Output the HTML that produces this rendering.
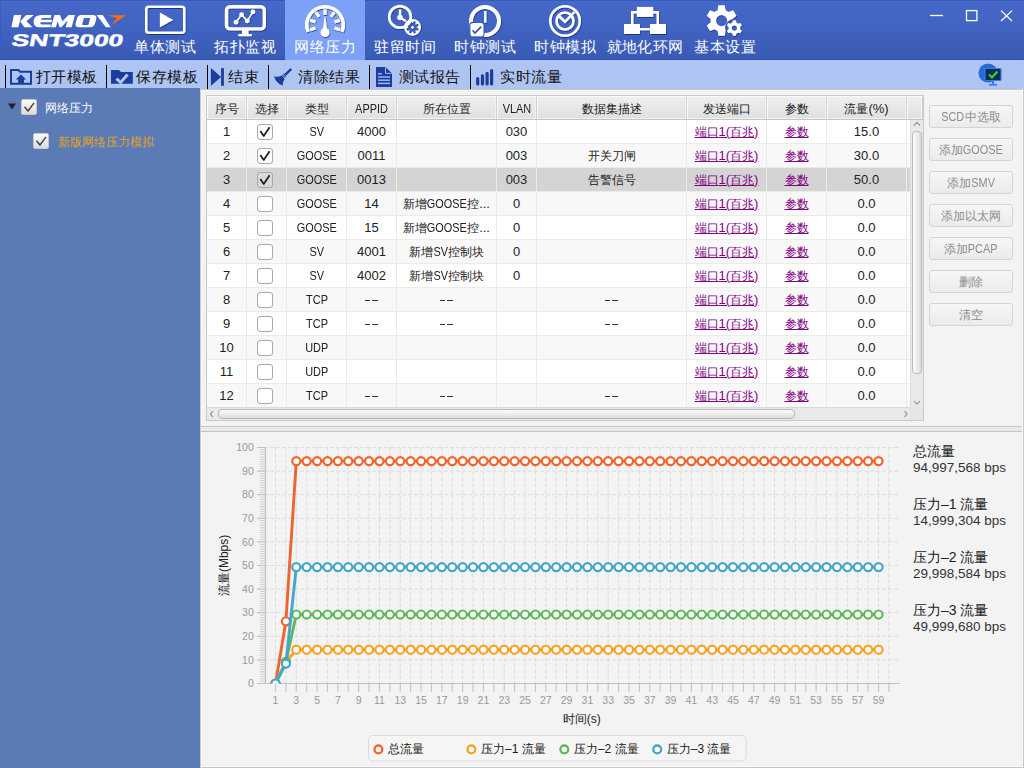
<!DOCTYPE html><html><head><meta charset="utf-8"><style>
*{margin:0;padding:0;box-sizing:border-box}
html,body{width:1024px;height:768px;overflow:hidden}
body{position:relative;background:#f3f3f3;font-family:"Liberation Sans",sans-serif;color:#222}
.a{position:absolute}
#top{position:absolute;left:0;top:0;width:1024px;height:60px;background:linear-gradient(#4669ca,#3a5bb5);border-top:1px solid #3559b9;border-bottom:1px solid #2f4fa6;border-left:1px solid #3a5cbc}
#active{position:absolute;left:285px;top:0;width:80px;height:60px;background:#7ca1f6}
.navl{position:absolute;top:38px;width:100px;text-align:center;color:#fff;font-size:15px;line-height:18px;white-space:nowrap;letter-spacing:0.35px;padding-left:0.35px}
#tb{position:absolute;left:0;top:60px;width:1024px;height:29px;background:#aec4f2}
.sep{position:absolute;top:65px;width:1px;height:24px;background:#000}
.tbl{position:absolute;top:66.5px;font-size:15px;line-height:20px;color:#111;white-space:nowrap;letter-spacing:0.6px}
#left{position:absolute;left:0;top:88px;width:200px;height:680px;background:#5b7bb6}
.cb{position:absolute;width:16px;height:16px;border:1px solid #c8c8c8;border-radius:2px;background:linear-gradient(#fafafa,#dcdcdc)}
#content{position:absolute;left:200px;top:89px;width:824px;height:679px;background:#f3f3f3;border-left:1px solid #cfcdc3;border-top:1px solid #c9c6ba;box-shadow:inset 1px 1px #f9f9f7}
</style></head><body>
<div id="top"></div><div id="active"></div>
<svg class="a" style="left:0;top:0" width="140" height="60">
<g fill="#fff">
<path d="M13.9 15.1 H21.4 L18.3 27.3 H11.4 Z"/>
<path d="M26.1 15.1 H33.8 L26.4 21.2 L32.6 27.3 H24.4 L20.2 21.4 Z"/>
<path fill-rule="evenodd" d="M41.5 15.1 H51.4 L50.7 18.1 H43 Q41.3 18.1 40.7 19.8 H52.1 L51.5 22.3 H40.2 Q40.2 24.5 42 24.5 H51 L50.3 27.3 H39.5 Q33.2 27.3 33.6 21.2 Q34.2 15.1 41.5 15.1 Z"/>
<path d="M51 27.3 L54.4 15.1 H60 L62.4 21.2 L68.6 15.1 H75 L71.6 27.3 H65.6 L67.6 20.6 L61.4 27.3 H59.6 L57.6 21.2 L55.9 27.3 Z"/>
<path fill-rule="evenodd" d="M81.4 15.1 H92.6 Q97.2 15.1 96.3 18.8 L95 23.6 Q94 27.3 89.6 27.3 H79 Q74.6 27.3 75.6 23.6 L76.9 18.8 Q77.8 15.1 81.4 15.1 Z M84.6 18.1 H89.4 Q90.2 18.1 90 18.9 L88.6 24.2 Q88.4 25 87.6 25 H82.8 Q82 25 82.2 24.2 L83.6 18.9 Q83.8 18.1 84.6 18.1 Z"/>
<path d="M96.6 15.1 H102.8 L110.6 27.3 H105.8 Z"/>
</g>
<path d="M107.6 15.2 L126 15.2 L110.4 25.9 L117.2 18.2 Z" fill="#f96f10"/>
<text x="11" y="45.4" font-family="Liberation Sans" font-weight="bold" font-size="17" fill="#fff" stroke="#fff" stroke-width="0.4" textLength="111.5" lengthAdjust="spacingAndGlyphs" transform="translate(8.6 0.5) skewX(-11)">SNT3000</text>
</svg>
<div class="navl" style="left:115px">单体测试</div>
<div class="navl" style="left:195px">拓扑监视</div>
<div class="navl" style="left:275px">网络压力</div>
<div class="navl" style="left:355px">驻留时间</div>
<div class="navl" style="left:435px">时钟测试</div>
<div class="navl" style="left:515px">时钟模拟</div>
<div class="navl" style="left:595px">就地化环网</div>
<div class="navl" style="left:675px">基本设置</div>
<svg class="a" style="left:0;top:0" width="1024" height="60">
<defs><filter id="sh" x="-20%" y="-20%" width="140%" height="140%"><feDropShadow dx="0.6" dy="1" stdDeviation="0.6" flood-color="#0c2080" flood-opacity="0.75"/></filter></defs>
<g filter="url(#sh)">
<g fill="none" stroke="#fff">
<rect x="146.25" y="6.85" width="38" height="25.9" rx="2.5" stroke-width="2.5"/>
<rect x="226.5" y="6.7" width="37.8" height="22.2" rx="3.5" stroke-width="3.4"/>
<path d="M308.08 31.84 A18.25 18.25 0 1 1 341.92 31.84" stroke-width="3.5"/>
<circle cx="400" cy="16.9" r="10.8" stroke-width="2.7"/>
<circle cx="565" cy="20.9" r="14.7" stroke-width="2.6"/>
<circle cx="565" cy="21" r="8.5" stroke-width="2.6"/>
<path d="M559.1 16.25 L565 21.8 L574.4 12.2" stroke-width="2.6"/>
<path d="M632.25 24 V12.2 H657.75 V24" stroke-width="2.5"/>
<path d="M640 29.2 H650" stroke-width="2.3"/>
<polyline points="236,22.2 241.6,14.7 247.25,20.9 252.9,11.9" stroke-width="1.6"/>
</g>
<g stroke="#fff" stroke-width="3.2"><line x1="325.00" y1="15.00" x2="325.00" y2="9.40"/><line x1="330.88" y1="16.91" x2="334.17" y2="12.38"/><line x1="334.51" y1="21.91" x2="339.84" y2="20.18"/><line x1="334.51" y1="28.09" x2="339.84" y2="29.82"/><line x1="319.12" y1="16.91" x2="315.83" y2="12.38"/><line x1="315.49" y1="21.91" x2="310.16" y2="20.18"/><line x1="315.49" y1="28.09" x2="310.16" y2="29.82"/></g>
<g fill="#fff">
<path d="M159.9 12.5 L173.25 19.9 L159.9 27.25 Z"/>
<rect x="242" y="29" width="6.5" height="6"/><rect x="238.2" y="34" width="13.8" height="2.2" rx="0.8"/>
<circle cx="236" cy="22.2" r="2.4"/><circle cx="241.6" cy="14.7" r="2.4"/><circle cx="247.25" cy="20.9" r="2.4"/><circle cx="252.9" cy="11.9" r="2.4"/>
<path d="M322.9 30 L324.6 16.8 L325.4 16.8 L327.1 30 Z"/><circle cx="325" cy="32.5" r="4.5"/>
<path d="M398.8 9.5 h2.4 v7.4 l5.2 3.2 -1.2 1.9 -6.4 -3.8 z"/><circle cx="400" cy="17.5" r="2.7"/>
<rect x="484.1" y="11" width="2.3" height="11.6"/>
<rect x="636.9" y="6.9" width="16.3" height="10"/><rect x="624" y="24" width="16" height="10"/><rect x="650" y="24" width="16" height="10"/>
</g>
<defs>
<mask id="m4"><rect x="395" y="10" width="30" height="30" fill="#fff"/><path d="M412.76 23.01L413.94 20.96L415.97 21.80L415.35 24.08A4.3 4.3 0 0 1 415.72 24.45L418.00 23.83L418.84 25.86L416.79 27.04A4.3 4.3 0 0 1 416.79 27.56L418.84 28.74L418.00 30.77L415.72 30.15A4.3 4.3 0 0 1 415.35 30.52L415.97 32.80L413.94 33.64L412.76 31.59A4.3 4.3 0 0 1 412.24 31.59L411.06 33.64L409.03 32.80L409.65 30.52A4.3 4.3 0 0 1 409.28 30.15L407.00 30.77L406.16 28.74L408.21 27.56A4.3 4.3 0 0 1 408.21 27.04L406.16 25.86L407.00 23.83L409.28 24.45A4.3 4.3 0 0 1 409.65 24.08L409.03 21.80L411.06 20.96L412.24 23.01A4.3 4.3 0 0 1 412.76 23.01Z" fill="#000"/><circle cx="412.5" cy="27.3" r="1.4" fill="#fff"/></mask>
<mask id="m5a"><rect x="460" y="0" width="50" height="45" fill="#fff"/><rect x="469.3" y="21.7" width="15.3" height="15.8" rx="3.6" fill="#000"/></mask>
<mask id="m5b"><rect x="460" y="0" width="50" height="45" fill="#fff"/><path d="M472.6 30.2 L474.9 33.1 L481.2 26.6" fill="none" stroke="#000" stroke-width="1.8"/></mask>
<mask id="m8a"><rect x="690" y="0" width="60" height="45" fill="#fff"/><circle cx="721.6" cy="20.6" r="5.6" fill="#000"/><circle cx="734.4" cy="28.1" r="9.4" fill="#000"/></mask>
<mask id="m8b"><rect x="690" y="0" width="60" height="45" fill="#fff"/><circle cx="734.4" cy="28.1" r="2.6" fill="#000"/></mask>
</defs>
<circle cx="412.5" cy="27.3" r="8.4" fill="#fff" mask="url(#m4)"/>
<circle cx="485" cy="21" r="14" stroke-width="4" fill="none" stroke="#fff" mask="url(#m5a)"/>
<rect x="470.5" y="22.9" width="12.9" height="13.4" rx="2.6" fill="#fff" mask="url(#m5b)"/>
<path d="M717.60 10.35L718.40 5.33L724.80 5.33L725.60 10.35A11 11 0 0 1 728.47 12.01L733.22 10.19L736.42 15.74L732.47 18.94A11 11 0 0 1 732.47 22.26L736.42 25.46L733.22 31.01L728.47 29.19A11 11 0 0 1 725.60 30.85L724.80 35.87L718.40 35.87L717.60 30.85A11 11 0 0 1 714.73 29.19L709.98 31.01L706.78 25.46L710.73 22.26A11 11 0 0 1 710.73 18.94L706.78 15.74L709.98 10.19L714.73 12.01A11 11 0 0 1 717.60 10.35Z" fill="#fff" mask="url(#m8a)"/>
<path d="M732.50 22.62L732.90 20.34L735.90 20.34L736.30 22.62A5.8 5.8 0 0 1 738.20 23.71L740.37 22.92L741.87 25.52L740.10 27.01A5.8 5.8 0 0 1 740.10 29.19L741.87 30.68L740.37 33.28L738.20 32.49A5.8 5.8 0 0 1 736.30 33.58L735.90 35.86L732.90 35.86L732.50 33.58A5.8 5.8 0 0 1 730.60 32.49L728.43 33.28L726.93 30.68L728.70 29.19A5.8 5.8 0 0 1 728.70 27.01L726.93 25.52L728.43 22.92L730.60 23.71A5.8 5.8 0 0 1 732.50 22.62Z" fill="#fff" mask="url(#m8b)"/>
</g>
<g stroke="#fff" stroke-width="1.3" fill="none">
<line x1="930" y1="15.5" x2="943" y2="15.5"/>
<rect x="966.5" y="10.6" width="10.4" height="10"/>
<line x1="1001" y1="10.6" x2="1012" y2="21"/><line x1="1012" y1="10.6" x2="1001" y2="21"/>
</g>
</svg>
<div id="tb"></div>
<div class="sep" style="left:5px"></div>
<div class="sep" style="left:106px"></div>
<div class="sep" style="left:207px"></div>
<div class="sep" style="left:268px"></div>
<div class="sep" style="left:369px"></div>
<div class="sep" style="left:470px"></div>
<div class="tbl" style="left:35.5px">打开模板</div>
<div class="tbl" style="left:136px">保存模板</div>
<div class="tbl" style="left:228px">结束</div>
<div class="tbl" style="left:298px">清除结果</div>
<div class="tbl" style="left:398.5px">测试报告</div>
<div class="tbl" style="left:500px">实时流量</div>
<svg class="a" style="left:0;top:60px" width="1024" height="29">
<g transform="translate(0,-60)">
<path d="M11 70 H18.5 L20 71.8 H31 V83.8 H11 Z" fill="none" stroke="#1a3d9e" stroke-width="2"/>
<path d="M21 74.4 L26.2 79.4 H23.9 V84 H18.2 V79.4 H15.8 Z" fill="#1a3d9e"/>
<path d="M111 70 H119 L121 72 H132.8 V83.8 H111 Z" fill="#1a3d9e"/>
<path d="M116.4 78.6 L120.6 82.4 L127.6 74.4" fill="none" stroke="#b3c4ee" stroke-width="3"/>
<path d="M210.9 68.1 L221.1 77 L210.9 85.8 Z" fill="#1a3d9e"/>
<rect x="221.1" y="68.1" width="2.8" height="17.7" fill="#1a3d9e"/>
<line x1="290.6" y1="69.6" x2="286.2" y2="73.8" stroke="#1a3d9e" stroke-width="2.4" stroke-linecap="round"/>
<line x1="283.6" y1="73.6" x2="286.3" y2="76.4" stroke="#1a3d9e" stroke-width="1.1"/>
<line x1="282.4" y1="74.9" x2="285.1" y2="77.7" stroke="#1a3d9e" stroke-width="1.1"/>
<path d="M274 76.3 Q278 77.6 281.6 75.6 L284.6 79 Q282.3 82.3 282.6 85.6 Q276.3 83.6 274 76.3 Z" fill="#1a3d9e"/>
<path d="M376 66.9 H385.5 L392 73.4 V86.9 H376 Z" fill="#1a3d9e"/>
<path d="M385.5 67.5 V73.4 H391.5" fill="none" stroke="#a9bdee" stroke-width="1"/>
<g stroke="#a9bdee" stroke-width="1.4"><line x1="378" y1="73.8" x2="382" y2="73.8"/><line x1="378" y1="77" x2="390" y2="77"/><line x1="378" y1="80.2" x2="390" y2="80.2"/><line x1="378" y1="83.4" x2="390" y2="83.4"/></g>
<g stroke="#1a3d9e" stroke-width="3.2" stroke-linecap="round">
<line x1="477.7" y1="78.6" x2="477.7" y2="84"/><line x1="482.5" y1="75.8" x2="482.5" y2="84"/><line x1="487.1" y1="73.3" x2="487.1" y2="84"/><line x1="491.6" y1="70.6" x2="491.6" y2="84"/>
</g>
<circle cx="988" cy="73" r="9.5" fill="#2a6ad8"/>
<rect x="985" y="68.5" width="16" height="12" rx="1" fill="#0d2a5a" stroke="#2f7fe8" stroke-width="1.2"/>
<path d="M989 74.5 L992 77.5 L997.5 71.5" fill="none" stroke="#22e022" stroke-width="2.2"/>
<rect x="992" y="81" width="2" height="3" fill="#2f7fe8"/><rect x="989" y="84" width="8" height="1.6" fill="#2f7fe8"/>
</g></svg>
<div id="left"></div>
<svg class="a" style="left:0;top:88px" width="200" height="80"><path d="M8 15.6 L16 15.6 L12 21.5 Z" fill="#222"/></svg>
<div class="cb" style="left:21px;top:99px"></div><div class="cb" style="left:33px;top:133px"></div>
<svg class="a" style="left:0;top:0" width="60" height="160"><g fill="none" stroke="#444" stroke-width="1.4"><path d="M24.5 106.8 L28 111 L34 102.8"/><path d="M36.5 140.8 L40 145 L46 136.8"/></g></svg>
<div class="a" style="left:45px;top:99px;font-size:12px;line-height:18px;color:#fff">网络压力</div>
<div class="a" style="left:58px;top:133px;font-size:12px;line-height:18px;color:#e6a31a">新版网络压力模拟</div>
<div id="content"></div>
<style>
#tbl{position:absolute;left:206px;top:95px;width:718px;height:326px;border:1px solid #c9c9c9;background:#fff;overflow:hidden}
.hd{position:absolute;top:96px;height:24px;background:linear-gradient(#efefef,#dfdfdf);border-right:1px solid #cfcfcf;border-bottom:1px solid #c4c4c4;font-size:13px;line-height:23px;text-align:center;color:#222;white-space:nowrap;border-top:1px solid #fafafa;box-shadow:inset 1px 0 #fbfbfb,inset -1px -1px #f2f2f2}
.row{position:absolute;left:207px;width:703px;height:24px}
.cl{position:absolute;top:120px;width:1px;height:287px;background:#ebebeb}
.hl{position:absolute;left:207px;width:703px;height:1px;background:#ebebeb}
.td{position:absolute;height:24px;font-size:13px;line-height:24px;text-align:center;color:#222;white-space:nowrap;overflow:hidden}
.lk{color:#800080;text-decoration:underline}
.tcb{position:absolute;width:15.5px;height:15.5px;border:1px solid #a9a9a9;border-radius:3px;background:#fff}
.btn{position:absolute;left:929px;width:84px;height:22.5px;border:1px solid #d4d4d4;border-radius:3px;background:linear-gradient(#f6f6f6,#ebebeb);font-size:13px;line-height:20px;padding-top:1px;text-align:center;color:#8c8c8c;white-space:nowrap}
</style>
<div id="tbl"></div>
<div class="hd" style="left:207px;width:40px"><span style="font-size:12px">序号</span></div>
<div class="hd" style="left:247px;width:40px"><span style="font-size:12px">选择</span></div>
<div class="hd" style="left:287px;width:60px"><span style="font-size:12px">类型</span></div>
<div class="hd" style="left:347px;width:50px"><span style="display:inline-block;transform:scaleX(.84);margin:0 -3.12px">APPID</span></div>
<div class="hd" style="left:397px;width:100px"><span style="font-size:12px">所在位置</span></div>
<div class="hd" style="left:497px;width:40px"><span style="display:inline-block;transform:scaleX(.84);margin:0 -2.72px">VLAN</span></div>
<div class="hd" style="left:537px;width:150px"><span style="font-size:12px">数据集描述</span></div>
<div class="hd" style="left:687px;width:80px"><span style="font-size:12px">发送端口</span></div>
<div class="hd" style="left:767px;width:60px"><span style="font-size:12px">参数</span></div>
<div class="hd" style="left:827px;width:80px"><span style="font-size:12px">流量</span>(%)</div>
<div class="hd" style="left:907px;width:16px"></div>
<div class="row" style="top:120px;background:#fff"></div>
<div class="row" style="top:144px;background:#f8f8f8"></div>
<div class="row" style="top:168px;background:#d4d4d4"></div>
<div class="row" style="top:192px;background:#f8f8f8"></div>
<div class="row" style="top:216px;background:#fff"></div>
<div class="row" style="top:240px;background:#f8f8f8"></div>
<div class="row" style="top:264px;background:#fff"></div>
<div class="row" style="top:288px;background:#f8f8f8"></div>
<div class="row" style="top:312px;background:#fff"></div>
<div class="row" style="top:336px;background:#f8f8f8"></div>
<div class="row" style="top:360px;background:#fff"></div>
<div class="row" style="top:384px;background:#f8f8f8"></div>
<div class="hl" style="top:143px"></div>
<div class="hl" style="top:167px"></div>
<div class="hl" style="top:191px"></div>
<div class="hl" style="top:215px"></div>
<div class="hl" style="top:239px"></div>
<div class="hl" style="top:263px"></div>
<div class="hl" style="top:287px"></div>
<div class="hl" style="top:311px"></div>
<div class="hl" style="top:335px"></div>
<div class="hl" style="top:359px"></div>
<div class="hl" style="top:383px"></div>
<div class="hl" style="top:407px"></div>
<div class="cl" style="left:246px"></div>
<div class="cl" style="left:286px"></div>
<div class="cl" style="left:346px"></div>
<div class="cl" style="left:396px"></div>
<div class="cl" style="left:496px"></div>
<div class="cl" style="left:536px"></div>
<div class="cl" style="left:686px"></div>
<div class="cl" style="left:766px"></div>
<div class="cl" style="left:826px"></div>
<div class="cl" style="left:906px"></div>
<div class="td" style="left:207px;top:120px;width:39px">1</div>
<div class="tcb" style="left:257px;top:124px;background:#fff"></div>
<svg class="a" style="left:257px;top:124px" width="16" height="16"><path d="M3.3 6.9 L6.7 11.9 L12.6 3.2" fill="none" stroke="#222" stroke-width="1.8" stroke-linejoin="round"/></svg>
<div class="td" style="left:287px;top:120px;width:59px"><span style="display:inline-block;transform:scaleX(.84);margin:0 -1.39px">SV</span></div>
<div class="td" style="left:347px;top:120px;width:49px">4000</div>
<div class="td" style="left:397px;top:120px;width:99px"></div>
<div class="td" style="left:497px;top:120px;width:39px">030</div>
<div class="td" style="left:537px;top:120px;width:149px"></div>
<div class="td" style="left:687px;top:120px;width:79px"><span class="lk"><span style="font-size:12px">端口</span>1(<span style="font-size:12px">百兆</span>)</span></div>
<div class="td" style="left:767px;top:120px;width:59px"><span class="lk"><span style="font-size:12px">参数</span></span></div>
<div class="td" style="left:827px;top:120px;width:79px">15.0</div>
<div class="td" style="left:207px;top:144px;width:39px">2</div>
<div class="tcb" style="left:257px;top:148px;background:#fff"></div>
<svg class="a" style="left:257px;top:148px" width="16" height="16"><path d="M3.3 6.9 L6.7 11.9 L12.6 3.2" fill="none" stroke="#222" stroke-width="1.8" stroke-linejoin="round"/></svg>
<div class="td" style="left:287px;top:144px;width:59px"><span style="display:inline-block;transform:scaleX(.84);margin:0 -3.81px">GOOSE</span></div>
<div class="td" style="left:347px;top:144px;width:49px">0011</div>
<div class="td" style="left:397px;top:144px;width:99px"></div>
<div class="td" style="left:497px;top:144px;width:39px">003</div>
<div class="td" style="left:537px;top:144px;width:149px"><span style="font-size:12px">开关刀闸</span></div>
<div class="td" style="left:687px;top:144px;width:79px"><span class="lk"><span style="font-size:12px">端口</span>1(<span style="font-size:12px">百兆</span>)</span></div>
<div class="td" style="left:767px;top:144px;width:59px"><span class="lk"><span style="font-size:12px">参数</span></span></div>
<div class="td" style="left:827px;top:144px;width:79px">30.0</div>
<div class="td" style="left:207px;top:168px;width:39px">3</div>
<div class="tcb" style="left:257px;top:172px;background:#d9d9d9"></div>
<svg class="a" style="left:257px;top:172px" width="16" height="16"><path d="M3.3 6.9 L6.7 11.9 L12.6 3.2" fill="none" stroke="#222" stroke-width="1.8" stroke-linejoin="round"/></svg>
<div class="td" style="left:287px;top:168px;width:59px"><span style="display:inline-block;transform:scaleX(.84);margin:0 -3.81px">GOOSE</span></div>
<div class="td" style="left:347px;top:168px;width:49px">0013</div>
<div class="td" style="left:397px;top:168px;width:99px"></div>
<div class="td" style="left:497px;top:168px;width:39px">003</div>
<div class="td" style="left:537px;top:168px;width:149px"><span style="font-size:12px">告警信号</span></div>
<div class="td" style="left:687px;top:168px;width:79px"><span class="lk"><span style="font-size:12px">端口</span>1(<span style="font-size:12px">百兆</span>)</span></div>
<div class="td" style="left:767px;top:168px;width:59px"><span class="lk"><span style="font-size:12px">参数</span></span></div>
<div class="td" style="left:827px;top:168px;width:79px">50.0</div>
<div class="td" style="left:207px;top:192px;width:39px">4</div>
<div class="tcb" style="left:257px;top:196px;background:#fff"></div>
<div class="td" style="left:287px;top:192px;width:59px"><span style="display:inline-block;transform:scaleX(.84);margin:0 -3.81px">GOOSE</span></div>
<div class="td" style="left:347px;top:192px;width:49px">14</div>
<div class="td" style="left:397px;top:192px;width:99px"><span style="font-size:12px">新增</span><span style="display:inline-block;transform:scaleX(.84);margin:0 -3.81px">GOOSE</span><span style="font-size:12px">控</span>...</div>
<div class="td" style="left:497px;top:192px;width:39px">0</div>
<div class="td" style="left:537px;top:192px;width:149px"></div>
<div class="td" style="left:687px;top:192px;width:79px"><span class="lk"><span style="font-size:12px">端口</span>1(<span style="font-size:12px">百兆</span>)</span></div>
<div class="td" style="left:767px;top:192px;width:59px"><span class="lk"><span style="font-size:12px">参数</span></span></div>
<div class="td" style="left:827px;top:192px;width:79px">0.0</div>
<div class="td" style="left:207px;top:216px;width:39px">5</div>
<div class="tcb" style="left:257px;top:220px;background:#fff"></div>
<div class="td" style="left:287px;top:216px;width:59px"><span style="display:inline-block;transform:scaleX(.84);margin:0 -3.81px">GOOSE</span></div>
<div class="td" style="left:347px;top:216px;width:49px">15</div>
<div class="td" style="left:397px;top:216px;width:99px"><span style="font-size:12px">新增</span><span style="display:inline-block;transform:scaleX(.84);margin:0 -3.81px">GOOSE</span><span style="font-size:12px">控</span>...</div>
<div class="td" style="left:497px;top:216px;width:39px">0</div>
<div class="td" style="left:537px;top:216px;width:149px"></div>
<div class="td" style="left:687px;top:216px;width:79px"><span class="lk"><span style="font-size:12px">端口</span>1(<span style="font-size:12px">百兆</span>)</span></div>
<div class="td" style="left:767px;top:216px;width:59px"><span class="lk"><span style="font-size:12px">参数</span></span></div>
<div class="td" style="left:827px;top:216px;width:79px">0.0</div>
<div class="td" style="left:207px;top:240px;width:39px">6</div>
<div class="tcb" style="left:257px;top:244px;background:#fff"></div>
<div class="td" style="left:287px;top:240px;width:59px"><span style="display:inline-block;transform:scaleX(.84);margin:0 -1.39px">SV</span></div>
<div class="td" style="left:347px;top:240px;width:49px">4001</div>
<div class="td" style="left:397px;top:240px;width:99px"><span style="font-size:12px">新增</span><span style="display:inline-block;transform:scaleX(.84);margin:0 -1.39px">SV</span><span style="font-size:12px">控制块</span></div>
<div class="td" style="left:497px;top:240px;width:39px">0</div>
<div class="td" style="left:537px;top:240px;width:149px"></div>
<div class="td" style="left:687px;top:240px;width:79px"><span class="lk"><span style="font-size:12px">端口</span>1(<span style="font-size:12px">百兆</span>)</span></div>
<div class="td" style="left:767px;top:240px;width:59px"><span class="lk"><span style="font-size:12px">参数</span></span></div>
<div class="td" style="left:827px;top:240px;width:79px">0.0</div>
<div class="td" style="left:207px;top:264px;width:39px">7</div>
<div class="tcb" style="left:257px;top:268px;background:#fff"></div>
<div class="td" style="left:287px;top:264px;width:59px"><span style="display:inline-block;transform:scaleX(.84);margin:0 -1.39px">SV</span></div>
<div class="td" style="left:347px;top:264px;width:49px">4002</div>
<div class="td" style="left:397px;top:264px;width:99px"><span style="font-size:12px">新增</span><span style="display:inline-block;transform:scaleX(.84);margin:0 -1.39px">SV</span><span style="font-size:12px">控制块</span></div>
<div class="td" style="left:497px;top:264px;width:39px">0</div>
<div class="td" style="left:537px;top:264px;width:149px"></div>
<div class="td" style="left:687px;top:264px;width:79px"><span class="lk"><span style="font-size:12px">端口</span>1(<span style="font-size:12px">百兆</span>)</span></div>
<div class="td" style="left:767px;top:264px;width:59px"><span class="lk"><span style="font-size:12px">参数</span></span></div>
<div class="td" style="left:827px;top:264px;width:79px">0.0</div>
<div class="td" style="left:207px;top:288px;width:39px">8</div>
<div class="tcb" style="left:257px;top:292px;background:#fff"></div>
<div class="td" style="left:287px;top:288px;width:59px"><span style="display:inline-block;transform:scaleX(.84);margin:0 -2.08px">TCP</span></div>
<div class="td" style="left:347px;top:288px;width:49px"><span style="display:inline-block;width:12.8px;height:1px;background:linear-gradient(90deg,#333 5.3px,transparent 5.3px,transparent 7.5px,#333 7.5px);vertical-align:middle;position:relative;top:0px"></span></div>
<div class="td" style="left:397px;top:288px;width:99px"><span style="display:inline-block;width:12.8px;height:1px;background:linear-gradient(90deg,#333 5.3px,transparent 5.3px,transparent 7.5px,#333 7.5px);vertical-align:middle;position:relative;top:0px"></span></div>
<div class="td" style="left:497px;top:288px;width:39px"></div>
<div class="td" style="left:537px;top:288px;width:149px"><span style="display:inline-block;width:12.8px;height:1px;background:linear-gradient(90deg,#333 5.3px,transparent 5.3px,transparent 7.5px,#333 7.5px);vertical-align:middle;position:relative;top:0px"></span></div>
<div class="td" style="left:687px;top:288px;width:79px"><span class="lk"><span style="font-size:12px">端口</span>1(<span style="font-size:12px">百兆</span>)</span></div>
<div class="td" style="left:767px;top:288px;width:59px"><span class="lk"><span style="font-size:12px">参数</span></span></div>
<div class="td" style="left:827px;top:288px;width:79px">0.0</div>
<div class="td" style="left:207px;top:312px;width:39px">9</div>
<div class="tcb" style="left:257px;top:316px;background:#fff"></div>
<div class="td" style="left:287px;top:312px;width:59px"><span style="display:inline-block;transform:scaleX(.84);margin:0 -2.08px">TCP</span></div>
<div class="td" style="left:347px;top:312px;width:49px"><span style="display:inline-block;width:12.8px;height:1px;background:linear-gradient(90deg,#333 5.3px,transparent 5.3px,transparent 7.5px,#333 7.5px);vertical-align:middle;position:relative;top:0px"></span></div>
<div class="td" style="left:397px;top:312px;width:99px"><span style="display:inline-block;width:12.8px;height:1px;background:linear-gradient(90deg,#333 5.3px,transparent 5.3px,transparent 7.5px,#333 7.5px);vertical-align:middle;position:relative;top:0px"></span></div>
<div class="td" style="left:497px;top:312px;width:39px"></div>
<div class="td" style="left:537px;top:312px;width:149px"><span style="display:inline-block;width:12.8px;height:1px;background:linear-gradient(90deg,#333 5.3px,transparent 5.3px,transparent 7.5px,#333 7.5px);vertical-align:middle;position:relative;top:0px"></span></div>
<div class="td" style="left:687px;top:312px;width:79px"><span class="lk"><span style="font-size:12px">端口</span>1(<span style="font-size:12px">百兆</span>)</span></div>
<div class="td" style="left:767px;top:312px;width:59px"><span class="lk"><span style="font-size:12px">参数</span></span></div>
<div class="td" style="left:827px;top:312px;width:79px">0.0</div>
<div class="td" style="left:207px;top:336px;width:39px">10</div>
<div class="tcb" style="left:257px;top:340px;background:#fff"></div>
<div class="td" style="left:287px;top:336px;width:59px"><span style="display:inline-block;transform:scaleX(.84);margin:0 -2.20px">UDP</span></div>
<div class="td" style="left:347px;top:336px;width:49px"></div>
<div class="td" style="left:397px;top:336px;width:99px"></div>
<div class="td" style="left:497px;top:336px;width:39px"></div>
<div class="td" style="left:537px;top:336px;width:149px"></div>
<div class="td" style="left:687px;top:336px;width:79px"><span class="lk"><span style="font-size:12px">端口</span>1(<span style="font-size:12px">百兆</span>)</span></div>
<div class="td" style="left:767px;top:336px;width:59px"><span class="lk"><span style="font-size:12px">参数</span></span></div>
<div class="td" style="left:827px;top:336px;width:79px">0.0</div>
<div class="td" style="left:207px;top:360px;width:39px">11</div>
<div class="tcb" style="left:257px;top:364px;background:#fff"></div>
<div class="td" style="left:287px;top:360px;width:59px"><span style="display:inline-block;transform:scaleX(.84);margin:0 -2.20px">UDP</span></div>
<div class="td" style="left:347px;top:360px;width:49px"></div>
<div class="td" style="left:397px;top:360px;width:99px"></div>
<div class="td" style="left:497px;top:360px;width:39px"></div>
<div class="td" style="left:537px;top:360px;width:149px"></div>
<div class="td" style="left:687px;top:360px;width:79px"><span class="lk"><span style="font-size:12px">端口</span>1(<span style="font-size:12px">百兆</span>)</span></div>
<div class="td" style="left:767px;top:360px;width:59px"><span class="lk"><span style="font-size:12px">参数</span></span></div>
<div class="td" style="left:827px;top:360px;width:79px">0.0</div>
<div class="td" style="left:207px;top:384px;width:39px">12</div>
<div class="tcb" style="left:257px;top:388px;background:#fff"></div>
<div class="td" style="left:287px;top:384px;width:59px"><span style="display:inline-block;transform:scaleX(.84);margin:0 -2.08px">TCP</span></div>
<div class="td" style="left:347px;top:384px;width:49px"><span style="display:inline-block;width:12.8px;height:1px;background:linear-gradient(90deg,#333 5.3px,transparent 5.3px,transparent 7.5px,#333 7.5px);vertical-align:middle;position:relative;top:0px"></span></div>
<div class="td" style="left:397px;top:384px;width:99px"><span style="display:inline-block;width:12.8px;height:1px;background:linear-gradient(90deg,#333 5.3px,transparent 5.3px,transparent 7.5px,#333 7.5px);vertical-align:middle;position:relative;top:0px"></span></div>
<div class="td" style="left:497px;top:384px;width:39px"></div>
<div class="td" style="left:537px;top:384px;width:149px"><span style="display:inline-block;width:12.8px;height:1px;background:linear-gradient(90deg,#333 5.3px,transparent 5.3px,transparent 7.5px,#333 7.5px);vertical-align:middle;position:relative;top:0px"></span></div>
<div class="td" style="left:687px;top:384px;width:79px"><span class="lk"><span style="font-size:12px">端口</span>1(<span style="font-size:12px">百兆</span>)</span></div>
<div class="td" style="left:767px;top:384px;width:59px"><span class="lk"><span style="font-size:12px">参数</span></span></div>
<div class="td" style="left:827px;top:384px;width:79px">0.0</div>
<div class="a" style="left:910px;top:120px;width:13px;height:287px;background:#e9e9e9;border-left:1px solid #e0e0e0"></div>
<div class="a" style="left:912px;top:131px;width:9.5px;height:243px;border:1px solid #b9b9b9;border-radius:4px;background:linear-gradient(90deg,#fdfdfd,#dcdcdc)"></div>
<div class="a" style="left:207px;top:407px;width:703px;height:13px;background:#e9e9e9;border-top:1px solid #dadada"></div>
<div class="a" style="left:218px;top:409px;width:577px;height:9.5px;border:1px solid #b9b9b9;border-radius:4px;background:linear-gradient(#fdfdfd,#dcdcdc)"></div>
<div class="a" style="left:910px;top:407px;width:13px;height:13px;background:#e6e6e6"></div>
<svg class="a" style="left:0;top:0" width="1024" height="430"><g fill="none" stroke="#858585" stroke-width="1.05">
<path d="M913.8 125.6 L917 122.4 L920.2 125.6"/><path d="M914 401 L917 404 L920 401"/>
<path d="M213 411 L210.5 414 L213 417"/><path d="M904.5 411 L907 414 L904.5 417"/></g></svg>

<div class="btn" style="top:105px"><span style="display:inline-block;transform:scaleX(.84);margin:0 -2.20px">SCD</span><span style="font-size:12px">中选取</span></div>
<div class="btn" style="top:138px"><span style="font-size:12px">添加</span><span style="display:inline-block;transform:scaleX(.84);margin:0 -3.81px">GOOSE</span></div>
<div class="btn" style="top:171px"><span style="font-size:12px">添加</span><span style="display:inline-block;transform:scaleX(.84);margin:0 -2.25px">SMV</span></div>
<div class="btn" style="top:204px"><span style="font-size:12px">添加以太网</span></div>
<div class="btn" style="top:237px"><span style="font-size:12px">添加</span><span style="display:inline-block;transform:scaleX(.84);margin:0 -2.83px">PCAP</span></div>
<div class="btn" style="top:270px"><span style="font-size:12px">删除</span></div>
<div class="btn" style="top:303px"><span style="font-size:12px">清空</span></div>
<div class="a" style="left:201px;top:426px;width:822px;height:6px;border-top:1px solid #c4c4c4;border-bottom:1px solid #c4c4c4;background:#e9e9e9"></div>
<svg class="a" style="left:0;top:0" width="1024" height="768">
<defs><clipPath id="pc"><rect x="266" y="440" width="640" height="243.5"/></clipPath></defs>
<path d="M275.50 447.5V683M285.90 447.5V683M296.29 447.5V683M306.69 447.5V683M317.09 447.5V683M327.49 447.5V683M337.88 447.5V683M348.28 447.5V683M358.68 447.5V683M369.07 447.5V683M379.47 447.5V683M389.87 447.5V683M400.26 447.5V683M410.66 447.5V683M421.06 447.5V683M431.46 447.5V683M441.85 447.5V683M452.25 447.5V683M462.65 447.5V683M473.04 447.5V683M483.44 447.5V683M493.84 447.5V683M504.23 447.5V683M514.63 447.5V683M525.03 447.5V683M535.42 447.5V683M545.82 447.5V683M556.22 447.5V683M566.62 447.5V683M577.01 447.5V683M587.41 447.5V683M597.81 447.5V683M608.20 447.5V683M618.60 447.5V683M629.00 447.5V683M639.39 447.5V683M649.79 447.5V683M660.19 447.5V683M670.59 447.5V683M680.98 447.5V683M691.38 447.5V683M701.78 447.5V683M712.17 447.5V683M722.57 447.5V683M732.97 447.5V683M743.37 447.5V683M753.76 447.5V683M764.16 447.5V683M774.56 447.5V683M784.95 447.5V683M795.35 447.5V683M805.75 447.5V683M816.14 447.5V683M826.54 447.5V683M836.94 447.5V683M847.34 447.5V683M857.73 447.5V683M868.13 447.5V683M878.53 447.5V683M888.92 447.5V683" stroke="#dcdcdc" stroke-width="1" stroke-dasharray="4 2" fill="none"/>
<path d="M266 659.90H899M266 636.30H899M266 612.70H899M266 589.10H899M266 565.50H899M266 541.90H899M266 518.30H899M266 494.70H899M266 471.10H899M266 447.50H899" stroke="#dcdcdc" stroke-width="1" stroke-dasharray="4 2" stroke-dashoffset="1.94" fill="none"/>
<path d="M265.5 447V684M257 683.5H900" stroke="#c2c2c2" stroke-width="1.2" fill="none"/>
<path d="M257 683.50H265M257 659.90H265M257 636.30H265M257 612.70H265M257 589.10H265M257 565.50H265M257 541.90H265M257 518.30H265M257 494.70H265M257 471.10H265M257 447.50H265" stroke="#c2c2c2" stroke-width="1.2"/>
<path d="M260 681.14H265M260 678.78H265M260 676.42H265M260 674.06H265M260 671.70H265M260 669.34H265M260 666.98H265M260 664.62H265M260 662.26H265M260 657.54H265M260 655.18H265M260 652.82H265M260 650.46H265M260 648.10H265M260 645.74H265M260 643.38H265M260 641.02H265M260 638.66H265M260 633.94H265M260 631.58H265M260 629.22H265M260 626.86H265M260 624.50H265M260 622.14H265M260 619.78H265M260 617.42H265M260 615.06H265M260 610.34H265M260 607.98H265M260 605.62H265M260 603.26H265M260 600.90H265M260 598.54H265M260 596.18H265M260 593.82H265M260 591.46H265M260 586.74H265M260 584.38H265M260 582.02H265M260 579.66H265M260 577.30H265M260 574.94H265M260 572.58H265M260 570.22H265M260 567.86H265M260 563.14H265M260 560.78H265M260 558.42H265M260 556.06H265M260 553.70H265M260 551.34H265M260 548.98H265M260 546.62H265M260 544.26H265M260 539.54H265M260 537.18H265M260 534.82H265M260 532.46H265M260 530.10H265M260 527.74H265M260 525.38H265M260 523.02H265M260 520.66H265M260 515.94H265M260 513.58H265M260 511.22H265M260 508.86H265M260 506.50H265M260 504.14H265M260 501.78H265M260 499.42H265M260 497.06H265M260 492.34H265M260 489.98H265M260 487.62H265M260 485.26H265M260 482.90H265M260 480.54H265M260 478.18H265M260 475.82H265M260 473.46H265M260 468.74H265M260 466.38H265M260 464.02H265M260 461.66H265M260 459.30H265M260 456.94H265M260 454.58H265M260 452.22H265M260 449.86H265" stroke="#cfcfcf" stroke-width="1"/>
<path d="M275.50 684V691.7M285.90 684V691.7M296.29 684V691.7M306.69 684V691.7M317.09 684V691.7M327.49 684V691.7M337.88 684V691.7M348.28 684V691.7M358.68 684V691.7M369.07 684V691.7M379.47 684V691.7M389.87 684V691.7M400.26 684V691.7M410.66 684V691.7M421.06 684V691.7M431.46 684V691.7M441.85 684V691.7M452.25 684V691.7M462.65 684V691.7M473.04 684V691.7M483.44 684V691.7M493.84 684V691.7M504.23 684V691.7M514.63 684V691.7M525.03 684V691.7M535.42 684V691.7M545.82 684V691.7M556.22 684V691.7M566.62 684V691.7M577.01 684V691.7M587.41 684V691.7M597.81 684V691.7M608.20 684V691.7M618.60 684V691.7M629.00 684V691.7M639.39 684V691.7M649.79 684V691.7M660.19 684V691.7M670.59 684V691.7M680.98 684V691.7M691.38 684V691.7M701.78 684V691.7M712.17 684V691.7M722.57 684V691.7M732.97 684V691.7M743.37 684V691.7M753.76 684V691.7M764.16 684V691.7M774.56 684V691.7M784.95 684V691.7M795.35 684V691.7M805.75 684V691.7M816.14 684V691.7M826.54 684V691.7M836.94 684V691.7M847.34 684V691.7M857.73 684V691.7M868.13 684V691.7M878.53 684V691.7M888.92 684V691.7" stroke="#c6c6c6" stroke-width="1.2"/>
<g font-family="Liberation Sans" font-size="10.5" fill="#999">
<text x="253.8" y="687.20" text-anchor="end">0</text>
<text x="253.8" y="663.60" text-anchor="end">10</text>
<text x="253.8" y="640.00" text-anchor="end">20</text>
<text x="253.8" y="616.40" text-anchor="end">30</text>
<text x="253.8" y="592.80" text-anchor="end">40</text>
<text x="253.8" y="569.20" text-anchor="end">50</text>
<text x="253.8" y="545.60" text-anchor="end">60</text>
<text x="253.8" y="522.00" text-anchor="end">70</text>
<text x="253.8" y="498.40" text-anchor="end">80</text>
<text x="253.8" y="474.80" text-anchor="end">90</text>
<text x="253.8" y="451.20" text-anchor="end">100</text>
<text x="275.50" y="703.8" text-anchor="middle">1</text>
<text x="296.29" y="703.8" text-anchor="middle">3</text>
<text x="317.09" y="703.8" text-anchor="middle">5</text>
<text x="337.88" y="703.8" text-anchor="middle">7</text>
<text x="358.68" y="703.8" text-anchor="middle">9</text>
<text x="379.47" y="703.8" text-anchor="middle">11</text>
<text x="400.26" y="703.8" text-anchor="middle">13</text>
<text x="421.06" y="703.8" text-anchor="middle">15</text>
<text x="441.85" y="703.8" text-anchor="middle">17</text>
<text x="462.65" y="703.8" text-anchor="middle">19</text>
<text x="483.44" y="703.8" text-anchor="middle">21</text>
<text x="504.23" y="703.8" text-anchor="middle">23</text>
<text x="525.03" y="703.8" text-anchor="middle">25</text>
<text x="545.82" y="703.8" text-anchor="middle">27</text>
<text x="566.62" y="703.8" text-anchor="middle">29</text>
<text x="587.41" y="703.8" text-anchor="middle">31</text>
<text x="608.20" y="703.8" text-anchor="middle">33</text>
<text x="629.00" y="703.8" text-anchor="middle">35</text>
<text x="649.79" y="703.8" text-anchor="middle">37</text>
<text x="670.59" y="703.8" text-anchor="middle">39</text>
<text x="691.38" y="703.8" text-anchor="middle">41</text>
<text x="712.17" y="703.8" text-anchor="middle">43</text>
<text x="732.97" y="703.8" text-anchor="middle">45</text>
<text x="753.76" y="703.8" text-anchor="middle">47</text>
<text x="774.56" y="703.8" text-anchor="middle">49</text>
<text x="795.35" y="703.8" text-anchor="middle">51</text>
<text x="816.14" y="703.8" text-anchor="middle">53</text>
<text x="836.94" y="703.8" text-anchor="middle">55</text>
<text x="857.73" y="703.8" text-anchor="middle">57</text>
<text x="878.53" y="703.8" text-anchor="middle">59</text>
</g>
<text x="0" y="0" font-family="Liberation Sans" font-size="12" fill="#222" text-anchor="middle" transform="translate(228 565.4) rotate(-90)">流量(Mbps)</text>
<text x="581.8" y="722.6" font-family="Liberation Sans" font-size="12" fill="#222" text-anchor="middle">时间(s)</text>
<g clip-path="url(#pc)">
<polyline points="275.50,683.50 285.90,621.30 296.29,461.10 306.69,461.10 317.09,461.10 327.49,461.10 337.88,461.10 348.28,461.10 358.68,461.10 369.07,461.10 379.47,461.10 389.87,461.10 400.26,461.10 410.66,461.10 421.06,461.10 431.46,461.10 441.85,461.10 452.25,461.10 462.65,461.10 473.04,461.10 483.44,461.10 493.84,461.10 504.23,461.10 514.63,461.10 525.03,461.10 535.42,461.10 545.82,461.10 556.22,461.10 566.62,461.10 577.01,461.10 587.41,461.10 597.81,461.10 608.20,461.10 618.60,461.10 629.00,461.10 639.39,461.10 649.79,461.10 660.19,461.10 670.59,461.10 680.98,461.10 691.38,461.10 701.78,461.10 712.17,461.10 722.57,461.10 732.97,461.10 743.37,461.10 753.76,461.10 764.16,461.10 774.56,461.10 784.95,461.10 795.35,461.10 805.75,461.10 816.14,461.10 826.54,461.10 836.94,461.10 847.34,461.10 857.73,461.10 868.13,461.10 878.53,461.10" fill="none" stroke="#f0652e" stroke-width="2.9" stroke-linejoin="round"/>
<circle cx="275.50" cy="683.50" r="4.05" fill="#fff" stroke="#f0652e" stroke-width="2.15"/><circle cx="285.90" cy="621.30" r="4.05" fill="#fff" stroke="#f0652e" stroke-width="2.15"/><circle cx="296.29" cy="461.10" r="4.05" fill="#fff" stroke="#f0652e" stroke-width="2.15"/><circle cx="306.69" cy="461.10" r="4.05" fill="#fff" stroke="#f0652e" stroke-width="2.15"/><circle cx="317.09" cy="461.10" r="4.05" fill="#fff" stroke="#f0652e" stroke-width="2.15"/><circle cx="327.49" cy="461.10" r="4.05" fill="#fff" stroke="#f0652e" stroke-width="2.15"/><circle cx="337.88" cy="461.10" r="4.05" fill="#fff" stroke="#f0652e" stroke-width="2.15"/><circle cx="348.28" cy="461.10" r="4.05" fill="#fff" stroke="#f0652e" stroke-width="2.15"/><circle cx="358.68" cy="461.10" r="4.05" fill="#fff" stroke="#f0652e" stroke-width="2.15"/><circle cx="369.07" cy="461.10" r="4.05" fill="#fff" stroke="#f0652e" stroke-width="2.15"/><circle cx="379.47" cy="461.10" r="4.05" fill="#fff" stroke="#f0652e" stroke-width="2.15"/><circle cx="389.87" cy="461.10" r="4.05" fill="#fff" stroke="#f0652e" stroke-width="2.15"/><circle cx="400.26" cy="461.10" r="4.05" fill="#fff" stroke="#f0652e" stroke-width="2.15"/><circle cx="410.66" cy="461.10" r="4.05" fill="#fff" stroke="#f0652e" stroke-width="2.15"/><circle cx="421.06" cy="461.10" r="4.05" fill="#fff" stroke="#f0652e" stroke-width="2.15"/><circle cx="431.46" cy="461.10" r="4.05" fill="#fff" stroke="#f0652e" stroke-width="2.15"/><circle cx="441.85" cy="461.10" r="4.05" fill="#fff" stroke="#f0652e" stroke-width="2.15"/><circle cx="452.25" cy="461.10" r="4.05" fill="#fff" stroke="#f0652e" stroke-width="2.15"/><circle cx="462.65" cy="461.10" r="4.05" fill="#fff" stroke="#f0652e" stroke-width="2.15"/><circle cx="473.04" cy="461.10" r="4.05" fill="#fff" stroke="#f0652e" stroke-width="2.15"/><circle cx="483.44" cy="461.10" r="4.05" fill="#fff" stroke="#f0652e" stroke-width="2.15"/><circle cx="493.84" cy="461.10" r="4.05" fill="#fff" stroke="#f0652e" stroke-width="2.15"/><circle cx="504.23" cy="461.10" r="4.05" fill="#fff" stroke="#f0652e" stroke-width="2.15"/><circle cx="514.63" cy="461.10" r="4.05" fill="#fff" stroke="#f0652e" stroke-width="2.15"/><circle cx="525.03" cy="461.10" r="4.05" fill="#fff" stroke="#f0652e" stroke-width="2.15"/><circle cx="535.42" cy="461.10" r="4.05" fill="#fff" stroke="#f0652e" stroke-width="2.15"/><circle cx="545.82" cy="461.10" r="4.05" fill="#fff" stroke="#f0652e" stroke-width="2.15"/><circle cx="556.22" cy="461.10" r="4.05" fill="#fff" stroke="#f0652e" stroke-width="2.15"/><circle cx="566.62" cy="461.10" r="4.05" fill="#fff" stroke="#f0652e" stroke-width="2.15"/><circle cx="577.01" cy="461.10" r="4.05" fill="#fff" stroke="#f0652e" stroke-width="2.15"/><circle cx="587.41" cy="461.10" r="4.05" fill="#fff" stroke="#f0652e" stroke-width="2.15"/><circle cx="597.81" cy="461.10" r="4.05" fill="#fff" stroke="#f0652e" stroke-width="2.15"/><circle cx="608.20" cy="461.10" r="4.05" fill="#fff" stroke="#f0652e" stroke-width="2.15"/><circle cx="618.60" cy="461.10" r="4.05" fill="#fff" stroke="#f0652e" stroke-width="2.15"/><circle cx="629.00" cy="461.10" r="4.05" fill="#fff" stroke="#f0652e" stroke-width="2.15"/><circle cx="639.39" cy="461.10" r="4.05" fill="#fff" stroke="#f0652e" stroke-width="2.15"/><circle cx="649.79" cy="461.10" r="4.05" fill="#fff" stroke="#f0652e" stroke-width="2.15"/><circle cx="660.19" cy="461.10" r="4.05" fill="#fff" stroke="#f0652e" stroke-width="2.15"/><circle cx="670.59" cy="461.10" r="4.05" fill="#fff" stroke="#f0652e" stroke-width="2.15"/><circle cx="680.98" cy="461.10" r="4.05" fill="#fff" stroke="#f0652e" stroke-width="2.15"/><circle cx="691.38" cy="461.10" r="4.05" fill="#fff" stroke="#f0652e" stroke-width="2.15"/><circle cx="701.78" cy="461.10" r="4.05" fill="#fff" stroke="#f0652e" stroke-width="2.15"/><circle cx="712.17" cy="461.10" r="4.05" fill="#fff" stroke="#f0652e" stroke-width="2.15"/><circle cx="722.57" cy="461.10" r="4.05" fill="#fff" stroke="#f0652e" stroke-width="2.15"/><circle cx="732.97" cy="461.10" r="4.05" fill="#fff" stroke="#f0652e" stroke-width="2.15"/><circle cx="743.37" cy="461.10" r="4.05" fill="#fff" stroke="#f0652e" stroke-width="2.15"/><circle cx="753.76" cy="461.10" r="4.05" fill="#fff" stroke="#f0652e" stroke-width="2.15"/><circle cx="764.16" cy="461.10" r="4.05" fill="#fff" stroke="#f0652e" stroke-width="2.15"/><circle cx="774.56" cy="461.10" r="4.05" fill="#fff" stroke="#f0652e" stroke-width="2.15"/><circle cx="784.95" cy="461.10" r="4.05" fill="#fff" stroke="#f0652e" stroke-width="2.15"/><circle cx="795.35" cy="461.10" r="4.05" fill="#fff" stroke="#f0652e" stroke-width="2.15"/><circle cx="805.75" cy="461.10" r="4.05" fill="#fff" stroke="#f0652e" stroke-width="2.15"/><circle cx="816.14" cy="461.10" r="4.05" fill="#fff" stroke="#f0652e" stroke-width="2.15"/><circle cx="826.54" cy="461.10" r="4.05" fill="#fff" stroke="#f0652e" stroke-width="2.15"/><circle cx="836.94" cy="461.10" r="4.05" fill="#fff" stroke="#f0652e" stroke-width="2.15"/><circle cx="847.34" cy="461.10" r="4.05" fill="#fff" stroke="#f0652e" stroke-width="2.15"/><circle cx="857.73" cy="461.10" r="4.05" fill="#fff" stroke="#f0652e" stroke-width="2.15"/><circle cx="868.13" cy="461.10" r="4.05" fill="#fff" stroke="#f0652e" stroke-width="2.15"/><circle cx="878.53" cy="461.10" r="4.05" fill="#fff" stroke="#f0652e" stroke-width="2.15"/>
<polyline points="275.50,683.50 285.90,662.00 296.29,649.70 306.69,649.70 317.09,649.70 327.49,649.70 337.88,649.70 348.28,649.70 358.68,649.70 369.07,649.70 379.47,649.70 389.87,649.70 400.26,649.70 410.66,649.70 421.06,649.70 431.46,649.70 441.85,649.70 452.25,649.70 462.65,649.70 473.04,649.70 483.44,649.70 493.84,649.70 504.23,649.70 514.63,649.70 525.03,649.70 535.42,649.70 545.82,649.70 556.22,649.70 566.62,649.70 577.01,649.70 587.41,649.70 597.81,649.70 608.20,649.70 618.60,649.70 629.00,649.70 639.39,649.70 649.79,649.70 660.19,649.70 670.59,649.70 680.98,649.70 691.38,649.70 701.78,649.70 712.17,649.70 722.57,649.70 732.97,649.70 743.37,649.70 753.76,649.70 764.16,649.70 774.56,649.70 784.95,649.70 795.35,649.70 805.75,649.70 816.14,649.70 826.54,649.70 836.94,649.70 847.34,649.70 857.73,649.70 868.13,649.70 878.53,649.70" fill="none" stroke="#f7a325" stroke-width="2.9" stroke-linejoin="round"/>
<circle cx="275.50" cy="683.50" r="4.05" fill="#fff" stroke="#f7a325" stroke-width="2.15"/><circle cx="285.90" cy="662.00" r="4.05" fill="#fff" stroke="#f7a325" stroke-width="2.15"/><circle cx="296.29" cy="649.70" r="4.05" fill="#fff" stroke="#f7a325" stroke-width="2.15"/><circle cx="306.69" cy="649.70" r="4.05" fill="#fff" stroke="#f7a325" stroke-width="2.15"/><circle cx="317.09" cy="649.70" r="4.05" fill="#fff" stroke="#f7a325" stroke-width="2.15"/><circle cx="327.49" cy="649.70" r="4.05" fill="#fff" stroke="#f7a325" stroke-width="2.15"/><circle cx="337.88" cy="649.70" r="4.05" fill="#fff" stroke="#f7a325" stroke-width="2.15"/><circle cx="348.28" cy="649.70" r="4.05" fill="#fff" stroke="#f7a325" stroke-width="2.15"/><circle cx="358.68" cy="649.70" r="4.05" fill="#fff" stroke="#f7a325" stroke-width="2.15"/><circle cx="369.07" cy="649.70" r="4.05" fill="#fff" stroke="#f7a325" stroke-width="2.15"/><circle cx="379.47" cy="649.70" r="4.05" fill="#fff" stroke="#f7a325" stroke-width="2.15"/><circle cx="389.87" cy="649.70" r="4.05" fill="#fff" stroke="#f7a325" stroke-width="2.15"/><circle cx="400.26" cy="649.70" r="4.05" fill="#fff" stroke="#f7a325" stroke-width="2.15"/><circle cx="410.66" cy="649.70" r="4.05" fill="#fff" stroke="#f7a325" stroke-width="2.15"/><circle cx="421.06" cy="649.70" r="4.05" fill="#fff" stroke="#f7a325" stroke-width="2.15"/><circle cx="431.46" cy="649.70" r="4.05" fill="#fff" stroke="#f7a325" stroke-width="2.15"/><circle cx="441.85" cy="649.70" r="4.05" fill="#fff" stroke="#f7a325" stroke-width="2.15"/><circle cx="452.25" cy="649.70" r="4.05" fill="#fff" stroke="#f7a325" stroke-width="2.15"/><circle cx="462.65" cy="649.70" r="4.05" fill="#fff" stroke="#f7a325" stroke-width="2.15"/><circle cx="473.04" cy="649.70" r="4.05" fill="#fff" stroke="#f7a325" stroke-width="2.15"/><circle cx="483.44" cy="649.70" r="4.05" fill="#fff" stroke="#f7a325" stroke-width="2.15"/><circle cx="493.84" cy="649.70" r="4.05" fill="#fff" stroke="#f7a325" stroke-width="2.15"/><circle cx="504.23" cy="649.70" r="4.05" fill="#fff" stroke="#f7a325" stroke-width="2.15"/><circle cx="514.63" cy="649.70" r="4.05" fill="#fff" stroke="#f7a325" stroke-width="2.15"/><circle cx="525.03" cy="649.70" r="4.05" fill="#fff" stroke="#f7a325" stroke-width="2.15"/><circle cx="535.42" cy="649.70" r="4.05" fill="#fff" stroke="#f7a325" stroke-width="2.15"/><circle cx="545.82" cy="649.70" r="4.05" fill="#fff" stroke="#f7a325" stroke-width="2.15"/><circle cx="556.22" cy="649.70" r="4.05" fill="#fff" stroke="#f7a325" stroke-width="2.15"/><circle cx="566.62" cy="649.70" r="4.05" fill="#fff" stroke="#f7a325" stroke-width="2.15"/><circle cx="577.01" cy="649.70" r="4.05" fill="#fff" stroke="#f7a325" stroke-width="2.15"/><circle cx="587.41" cy="649.70" r="4.05" fill="#fff" stroke="#f7a325" stroke-width="2.15"/><circle cx="597.81" cy="649.70" r="4.05" fill="#fff" stroke="#f7a325" stroke-width="2.15"/><circle cx="608.20" cy="649.70" r="4.05" fill="#fff" stroke="#f7a325" stroke-width="2.15"/><circle cx="618.60" cy="649.70" r="4.05" fill="#fff" stroke="#f7a325" stroke-width="2.15"/><circle cx="629.00" cy="649.70" r="4.05" fill="#fff" stroke="#f7a325" stroke-width="2.15"/><circle cx="639.39" cy="649.70" r="4.05" fill="#fff" stroke="#f7a325" stroke-width="2.15"/><circle cx="649.79" cy="649.70" r="4.05" fill="#fff" stroke="#f7a325" stroke-width="2.15"/><circle cx="660.19" cy="649.70" r="4.05" fill="#fff" stroke="#f7a325" stroke-width="2.15"/><circle cx="670.59" cy="649.70" r="4.05" fill="#fff" stroke="#f7a325" stroke-width="2.15"/><circle cx="680.98" cy="649.70" r="4.05" fill="#fff" stroke="#f7a325" stroke-width="2.15"/><circle cx="691.38" cy="649.70" r="4.05" fill="#fff" stroke="#f7a325" stroke-width="2.15"/><circle cx="701.78" cy="649.70" r="4.05" fill="#fff" stroke="#f7a325" stroke-width="2.15"/><circle cx="712.17" cy="649.70" r="4.05" fill="#fff" stroke="#f7a325" stroke-width="2.15"/><circle cx="722.57" cy="649.70" r="4.05" fill="#fff" stroke="#f7a325" stroke-width="2.15"/><circle cx="732.97" cy="649.70" r="4.05" fill="#fff" stroke="#f7a325" stroke-width="2.15"/><circle cx="743.37" cy="649.70" r="4.05" fill="#fff" stroke="#f7a325" stroke-width="2.15"/><circle cx="753.76" cy="649.70" r="4.05" fill="#fff" stroke="#f7a325" stroke-width="2.15"/><circle cx="764.16" cy="649.70" r="4.05" fill="#fff" stroke="#f7a325" stroke-width="2.15"/><circle cx="774.56" cy="649.70" r="4.05" fill="#fff" stroke="#f7a325" stroke-width="2.15"/><circle cx="784.95" cy="649.70" r="4.05" fill="#fff" stroke="#f7a325" stroke-width="2.15"/><circle cx="795.35" cy="649.70" r="4.05" fill="#fff" stroke="#f7a325" stroke-width="2.15"/><circle cx="805.75" cy="649.70" r="4.05" fill="#fff" stroke="#f7a325" stroke-width="2.15"/><circle cx="816.14" cy="649.70" r="4.05" fill="#fff" stroke="#f7a325" stroke-width="2.15"/><circle cx="826.54" cy="649.70" r="4.05" fill="#fff" stroke="#f7a325" stroke-width="2.15"/><circle cx="836.94" cy="649.70" r="4.05" fill="#fff" stroke="#f7a325" stroke-width="2.15"/><circle cx="847.34" cy="649.70" r="4.05" fill="#fff" stroke="#f7a325" stroke-width="2.15"/><circle cx="857.73" cy="649.70" r="4.05" fill="#fff" stroke="#f7a325" stroke-width="2.15"/><circle cx="868.13" cy="649.70" r="4.05" fill="#fff" stroke="#f7a325" stroke-width="2.15"/><circle cx="878.53" cy="649.70" r="4.05" fill="#fff" stroke="#f7a325" stroke-width="2.15"/>
<polyline points="275.50,683.50 285.90,661.90 296.29,614.50 306.69,614.50 317.09,614.50 327.49,614.50 337.88,614.50 348.28,614.50 358.68,614.50 369.07,614.50 379.47,614.50 389.87,614.50 400.26,614.50 410.66,614.50 421.06,614.50 431.46,614.50 441.85,614.50 452.25,614.50 462.65,614.50 473.04,614.50 483.44,614.50 493.84,614.50 504.23,614.50 514.63,614.50 525.03,614.50 535.42,614.50 545.82,614.50 556.22,614.50 566.62,614.50 577.01,614.50 587.41,614.50 597.81,614.50 608.20,614.50 618.60,614.50 629.00,614.50 639.39,614.50 649.79,614.50 660.19,614.50 670.59,614.50 680.98,614.50 691.38,614.50 701.78,614.50 712.17,614.50 722.57,614.50 732.97,614.50 743.37,614.50 753.76,614.50 764.16,614.50 774.56,614.50 784.95,614.50 795.35,614.50 805.75,614.50 816.14,614.50 826.54,614.50 836.94,614.50 847.34,614.50 857.73,614.50 868.13,614.50 878.53,614.50" fill="none" stroke="#5fb95c" stroke-width="2.9" stroke-linejoin="round"/>
<circle cx="275.50" cy="683.50" r="4.05" fill="#fff" stroke="#5fb95c" stroke-width="2.15"/><circle cx="285.90" cy="661.90" r="4.05" fill="#fff" stroke="#5fb95c" stroke-width="2.15"/><circle cx="296.29" cy="614.50" r="4.05" fill="#fff" stroke="#5fb95c" stroke-width="2.15"/><circle cx="306.69" cy="614.50" r="4.05" fill="#fff" stroke="#5fb95c" stroke-width="2.15"/><circle cx="317.09" cy="614.50" r="4.05" fill="#fff" stroke="#5fb95c" stroke-width="2.15"/><circle cx="327.49" cy="614.50" r="4.05" fill="#fff" stroke="#5fb95c" stroke-width="2.15"/><circle cx="337.88" cy="614.50" r="4.05" fill="#fff" stroke="#5fb95c" stroke-width="2.15"/><circle cx="348.28" cy="614.50" r="4.05" fill="#fff" stroke="#5fb95c" stroke-width="2.15"/><circle cx="358.68" cy="614.50" r="4.05" fill="#fff" stroke="#5fb95c" stroke-width="2.15"/><circle cx="369.07" cy="614.50" r="4.05" fill="#fff" stroke="#5fb95c" stroke-width="2.15"/><circle cx="379.47" cy="614.50" r="4.05" fill="#fff" stroke="#5fb95c" stroke-width="2.15"/><circle cx="389.87" cy="614.50" r="4.05" fill="#fff" stroke="#5fb95c" stroke-width="2.15"/><circle cx="400.26" cy="614.50" r="4.05" fill="#fff" stroke="#5fb95c" stroke-width="2.15"/><circle cx="410.66" cy="614.50" r="4.05" fill="#fff" stroke="#5fb95c" stroke-width="2.15"/><circle cx="421.06" cy="614.50" r="4.05" fill="#fff" stroke="#5fb95c" stroke-width="2.15"/><circle cx="431.46" cy="614.50" r="4.05" fill="#fff" stroke="#5fb95c" stroke-width="2.15"/><circle cx="441.85" cy="614.50" r="4.05" fill="#fff" stroke="#5fb95c" stroke-width="2.15"/><circle cx="452.25" cy="614.50" r="4.05" fill="#fff" stroke="#5fb95c" stroke-width="2.15"/><circle cx="462.65" cy="614.50" r="4.05" fill="#fff" stroke="#5fb95c" stroke-width="2.15"/><circle cx="473.04" cy="614.50" r="4.05" fill="#fff" stroke="#5fb95c" stroke-width="2.15"/><circle cx="483.44" cy="614.50" r="4.05" fill="#fff" stroke="#5fb95c" stroke-width="2.15"/><circle cx="493.84" cy="614.50" r="4.05" fill="#fff" stroke="#5fb95c" stroke-width="2.15"/><circle cx="504.23" cy="614.50" r="4.05" fill="#fff" stroke="#5fb95c" stroke-width="2.15"/><circle cx="514.63" cy="614.50" r="4.05" fill="#fff" stroke="#5fb95c" stroke-width="2.15"/><circle cx="525.03" cy="614.50" r="4.05" fill="#fff" stroke="#5fb95c" stroke-width="2.15"/><circle cx="535.42" cy="614.50" r="4.05" fill="#fff" stroke="#5fb95c" stroke-width="2.15"/><circle cx="545.82" cy="614.50" r="4.05" fill="#fff" stroke="#5fb95c" stroke-width="2.15"/><circle cx="556.22" cy="614.50" r="4.05" fill="#fff" stroke="#5fb95c" stroke-width="2.15"/><circle cx="566.62" cy="614.50" r="4.05" fill="#fff" stroke="#5fb95c" stroke-width="2.15"/><circle cx="577.01" cy="614.50" r="4.05" fill="#fff" stroke="#5fb95c" stroke-width="2.15"/><circle cx="587.41" cy="614.50" r="4.05" fill="#fff" stroke="#5fb95c" stroke-width="2.15"/><circle cx="597.81" cy="614.50" r="4.05" fill="#fff" stroke="#5fb95c" stroke-width="2.15"/><circle cx="608.20" cy="614.50" r="4.05" fill="#fff" stroke="#5fb95c" stroke-width="2.15"/><circle cx="618.60" cy="614.50" r="4.05" fill="#fff" stroke="#5fb95c" stroke-width="2.15"/><circle cx="629.00" cy="614.50" r="4.05" fill="#fff" stroke="#5fb95c" stroke-width="2.15"/><circle cx="639.39" cy="614.50" r="4.05" fill="#fff" stroke="#5fb95c" stroke-width="2.15"/><circle cx="649.79" cy="614.50" r="4.05" fill="#fff" stroke="#5fb95c" stroke-width="2.15"/><circle cx="660.19" cy="614.50" r="4.05" fill="#fff" stroke="#5fb95c" stroke-width="2.15"/><circle cx="670.59" cy="614.50" r="4.05" fill="#fff" stroke="#5fb95c" stroke-width="2.15"/><circle cx="680.98" cy="614.50" r="4.05" fill="#fff" stroke="#5fb95c" stroke-width="2.15"/><circle cx="691.38" cy="614.50" r="4.05" fill="#fff" stroke="#5fb95c" stroke-width="2.15"/><circle cx="701.78" cy="614.50" r="4.05" fill="#fff" stroke="#5fb95c" stroke-width="2.15"/><circle cx="712.17" cy="614.50" r="4.05" fill="#fff" stroke="#5fb95c" stroke-width="2.15"/><circle cx="722.57" cy="614.50" r="4.05" fill="#fff" stroke="#5fb95c" stroke-width="2.15"/><circle cx="732.97" cy="614.50" r="4.05" fill="#fff" stroke="#5fb95c" stroke-width="2.15"/><circle cx="743.37" cy="614.50" r="4.05" fill="#fff" stroke="#5fb95c" stroke-width="2.15"/><circle cx="753.76" cy="614.50" r="4.05" fill="#fff" stroke="#5fb95c" stroke-width="2.15"/><circle cx="764.16" cy="614.50" r="4.05" fill="#fff" stroke="#5fb95c" stroke-width="2.15"/><circle cx="774.56" cy="614.50" r="4.05" fill="#fff" stroke="#5fb95c" stroke-width="2.15"/><circle cx="784.95" cy="614.50" r="4.05" fill="#fff" stroke="#5fb95c" stroke-width="2.15"/><circle cx="795.35" cy="614.50" r="4.05" fill="#fff" stroke="#5fb95c" stroke-width="2.15"/><circle cx="805.75" cy="614.50" r="4.05" fill="#fff" stroke="#5fb95c" stroke-width="2.15"/><circle cx="816.14" cy="614.50" r="4.05" fill="#fff" stroke="#5fb95c" stroke-width="2.15"/><circle cx="826.54" cy="614.50" r="4.05" fill="#fff" stroke="#5fb95c" stroke-width="2.15"/><circle cx="836.94" cy="614.50" r="4.05" fill="#fff" stroke="#5fb95c" stroke-width="2.15"/><circle cx="847.34" cy="614.50" r="4.05" fill="#fff" stroke="#5fb95c" stroke-width="2.15"/><circle cx="857.73" cy="614.50" r="4.05" fill="#fff" stroke="#5fb95c" stroke-width="2.15"/><circle cx="868.13" cy="614.50" r="4.05" fill="#fff" stroke="#5fb95c" stroke-width="2.15"/><circle cx="878.53" cy="614.50" r="4.05" fill="#fff" stroke="#5fb95c" stroke-width="2.15"/>
<polyline points="275.50,683.50 285.90,663.60 296.29,567.10 306.69,567.10 317.09,567.10 327.49,567.10 337.88,567.10 348.28,567.10 358.68,567.10 369.07,567.10 379.47,567.10 389.87,567.10 400.26,567.10 410.66,567.10 421.06,567.10 431.46,567.10 441.85,567.10 452.25,567.10 462.65,567.10 473.04,567.10 483.44,567.10 493.84,567.10 504.23,567.10 514.63,567.10 525.03,567.10 535.42,567.10 545.82,567.10 556.22,567.10 566.62,567.10 577.01,567.10 587.41,567.10 597.81,567.10 608.20,567.10 618.60,567.10 629.00,567.10 639.39,567.10 649.79,567.10 660.19,567.10 670.59,567.10 680.98,567.10 691.38,567.10 701.78,567.10 712.17,567.10 722.57,567.10 732.97,567.10 743.37,567.10 753.76,567.10 764.16,567.10 774.56,567.10 784.95,567.10 795.35,567.10 805.75,567.10 816.14,567.10 826.54,567.10 836.94,567.10 847.34,567.10 857.73,567.10 868.13,567.10 878.53,567.10" fill="none" stroke="#45a6ca" stroke-width="2.9" stroke-linejoin="round"/>
<circle cx="275.50" cy="683.50" r="4.05" fill="#fff" stroke="#45a6ca" stroke-width="2.15"/><circle cx="285.90" cy="663.60" r="4.05" fill="#fff" stroke="#45a6ca" stroke-width="2.15"/><circle cx="296.29" cy="567.10" r="4.05" fill="#fff" stroke="#45a6ca" stroke-width="2.15"/><circle cx="306.69" cy="567.10" r="4.05" fill="#fff" stroke="#45a6ca" stroke-width="2.15"/><circle cx="317.09" cy="567.10" r="4.05" fill="#fff" stroke="#45a6ca" stroke-width="2.15"/><circle cx="327.49" cy="567.10" r="4.05" fill="#fff" stroke="#45a6ca" stroke-width="2.15"/><circle cx="337.88" cy="567.10" r="4.05" fill="#fff" stroke="#45a6ca" stroke-width="2.15"/><circle cx="348.28" cy="567.10" r="4.05" fill="#fff" stroke="#45a6ca" stroke-width="2.15"/><circle cx="358.68" cy="567.10" r="4.05" fill="#fff" stroke="#45a6ca" stroke-width="2.15"/><circle cx="369.07" cy="567.10" r="4.05" fill="#fff" stroke="#45a6ca" stroke-width="2.15"/><circle cx="379.47" cy="567.10" r="4.05" fill="#fff" stroke="#45a6ca" stroke-width="2.15"/><circle cx="389.87" cy="567.10" r="4.05" fill="#fff" stroke="#45a6ca" stroke-width="2.15"/><circle cx="400.26" cy="567.10" r="4.05" fill="#fff" stroke="#45a6ca" stroke-width="2.15"/><circle cx="410.66" cy="567.10" r="4.05" fill="#fff" stroke="#45a6ca" stroke-width="2.15"/><circle cx="421.06" cy="567.10" r="4.05" fill="#fff" stroke="#45a6ca" stroke-width="2.15"/><circle cx="431.46" cy="567.10" r="4.05" fill="#fff" stroke="#45a6ca" stroke-width="2.15"/><circle cx="441.85" cy="567.10" r="4.05" fill="#fff" stroke="#45a6ca" stroke-width="2.15"/><circle cx="452.25" cy="567.10" r="4.05" fill="#fff" stroke="#45a6ca" stroke-width="2.15"/><circle cx="462.65" cy="567.10" r="4.05" fill="#fff" stroke="#45a6ca" stroke-width="2.15"/><circle cx="473.04" cy="567.10" r="4.05" fill="#fff" stroke="#45a6ca" stroke-width="2.15"/><circle cx="483.44" cy="567.10" r="4.05" fill="#fff" stroke="#45a6ca" stroke-width="2.15"/><circle cx="493.84" cy="567.10" r="4.05" fill="#fff" stroke="#45a6ca" stroke-width="2.15"/><circle cx="504.23" cy="567.10" r="4.05" fill="#fff" stroke="#45a6ca" stroke-width="2.15"/><circle cx="514.63" cy="567.10" r="4.05" fill="#fff" stroke="#45a6ca" stroke-width="2.15"/><circle cx="525.03" cy="567.10" r="4.05" fill="#fff" stroke="#45a6ca" stroke-width="2.15"/><circle cx="535.42" cy="567.10" r="4.05" fill="#fff" stroke="#45a6ca" stroke-width="2.15"/><circle cx="545.82" cy="567.10" r="4.05" fill="#fff" stroke="#45a6ca" stroke-width="2.15"/><circle cx="556.22" cy="567.10" r="4.05" fill="#fff" stroke="#45a6ca" stroke-width="2.15"/><circle cx="566.62" cy="567.10" r="4.05" fill="#fff" stroke="#45a6ca" stroke-width="2.15"/><circle cx="577.01" cy="567.10" r="4.05" fill="#fff" stroke="#45a6ca" stroke-width="2.15"/><circle cx="587.41" cy="567.10" r="4.05" fill="#fff" stroke="#45a6ca" stroke-width="2.15"/><circle cx="597.81" cy="567.10" r="4.05" fill="#fff" stroke="#45a6ca" stroke-width="2.15"/><circle cx="608.20" cy="567.10" r="4.05" fill="#fff" stroke="#45a6ca" stroke-width="2.15"/><circle cx="618.60" cy="567.10" r="4.05" fill="#fff" stroke="#45a6ca" stroke-width="2.15"/><circle cx="629.00" cy="567.10" r="4.05" fill="#fff" stroke="#45a6ca" stroke-width="2.15"/><circle cx="639.39" cy="567.10" r="4.05" fill="#fff" stroke="#45a6ca" stroke-width="2.15"/><circle cx="649.79" cy="567.10" r="4.05" fill="#fff" stroke="#45a6ca" stroke-width="2.15"/><circle cx="660.19" cy="567.10" r="4.05" fill="#fff" stroke="#45a6ca" stroke-width="2.15"/><circle cx="670.59" cy="567.10" r="4.05" fill="#fff" stroke="#45a6ca" stroke-width="2.15"/><circle cx="680.98" cy="567.10" r="4.05" fill="#fff" stroke="#45a6ca" stroke-width="2.15"/><circle cx="691.38" cy="567.10" r="4.05" fill="#fff" stroke="#45a6ca" stroke-width="2.15"/><circle cx="701.78" cy="567.10" r="4.05" fill="#fff" stroke="#45a6ca" stroke-width="2.15"/><circle cx="712.17" cy="567.10" r="4.05" fill="#fff" stroke="#45a6ca" stroke-width="2.15"/><circle cx="722.57" cy="567.10" r="4.05" fill="#fff" stroke="#45a6ca" stroke-width="2.15"/><circle cx="732.97" cy="567.10" r="4.05" fill="#fff" stroke="#45a6ca" stroke-width="2.15"/><circle cx="743.37" cy="567.10" r="4.05" fill="#fff" stroke="#45a6ca" stroke-width="2.15"/><circle cx="753.76" cy="567.10" r="4.05" fill="#fff" stroke="#45a6ca" stroke-width="2.15"/><circle cx="764.16" cy="567.10" r="4.05" fill="#fff" stroke="#45a6ca" stroke-width="2.15"/><circle cx="774.56" cy="567.10" r="4.05" fill="#fff" stroke="#45a6ca" stroke-width="2.15"/><circle cx="784.95" cy="567.10" r="4.05" fill="#fff" stroke="#45a6ca" stroke-width="2.15"/><circle cx="795.35" cy="567.10" r="4.05" fill="#fff" stroke="#45a6ca" stroke-width="2.15"/><circle cx="805.75" cy="567.10" r="4.05" fill="#fff" stroke="#45a6ca" stroke-width="2.15"/><circle cx="816.14" cy="567.10" r="4.05" fill="#fff" stroke="#45a6ca" stroke-width="2.15"/><circle cx="826.54" cy="567.10" r="4.05" fill="#fff" stroke="#45a6ca" stroke-width="2.15"/><circle cx="836.94" cy="567.10" r="4.05" fill="#fff" stroke="#45a6ca" stroke-width="2.15"/><circle cx="847.34" cy="567.10" r="4.05" fill="#fff" stroke="#45a6ca" stroke-width="2.15"/><circle cx="857.73" cy="567.10" r="4.05" fill="#fff" stroke="#45a6ca" stroke-width="2.15"/><circle cx="868.13" cy="567.10" r="4.05" fill="#fff" stroke="#45a6ca" stroke-width="2.15"/><circle cx="878.53" cy="567.10" r="4.05" fill="#fff" stroke="#45a6ca" stroke-width="2.15"/>
</g>
<text x="913" y="456.3" font-family="Liberation Sans" font-size="14" fill="#222">总流量</text>
<text x="913" y="471.7" font-family="Liberation Sans" font-size="13.5" fill="#333">94,997,568 bps</text>
<text x="913" y="509.3" font-family="Liberation Sans" font-size="14" fill="#222">压力–1 流量</text>
<text x="913" y="524.7" font-family="Liberation Sans" font-size="13.5" fill="#333">14,999,304 bps</text>
<text x="913" y="562.3" font-family="Liberation Sans" font-size="14" fill="#222">压力–2 流量</text>
<text x="913" y="577.7" font-family="Liberation Sans" font-size="13.5" fill="#333">29,998,584 bps</text>
<text x="913" y="615.3" font-family="Liberation Sans" font-size="14" fill="#222">压力–3 流量</text>
<text x="913" y="630.7" font-family="Liberation Sans" font-size="13.5" fill="#333">49,999,680 bps</text>
<rect x="368.5" y="735.5" width="377.5" height="25.5" rx="4" fill="#f5f5f5" stroke="#dadada" stroke-width="1"/>
<circle cx="378.4" cy="749.4" r="3.9" fill="#fff" stroke="#f0652e" stroke-width="2.3"/>
<text x="388.0" y="753.3" font-family="Liberation Sans" font-size="12" fill="#222">总流量</text>
<circle cx="471.4" cy="749.4" r="3.9" fill="#fff" stroke="#f7a325" stroke-width="2.3"/>
<text x="481.0" y="753.3" font-family="Liberation Sans" font-size="12" fill="#222">压力–1 流量</text>
<circle cx="564.3" cy="749.4" r="3.9" fill="#fff" stroke="#5fb95c" stroke-width="2.3"/>
<text x="573.9" y="753.3" font-family="Liberation Sans" font-size="12" fill="#222">压力–2 流量</text>
<circle cx="657.2" cy="749.4" r="3.9" fill="#fff" stroke="#45a6ca" stroke-width="2.3"/>
<text x="666.8000000000001" y="753.3" font-family="Liberation Sans" font-size="12" fill="#222">压力–3 流量</text>
</svg>
<div class="a" style="left:1022px;top:89px;width:2px;height:679px;border-left:1px solid #fafafa;background:#c6c6c6"></div>
<div class="a" style="left:201px;top:766px;width:822px;height:2px;border-top:1px solid #fafafa;background:#c6c6c6"></div>
</body></html>
